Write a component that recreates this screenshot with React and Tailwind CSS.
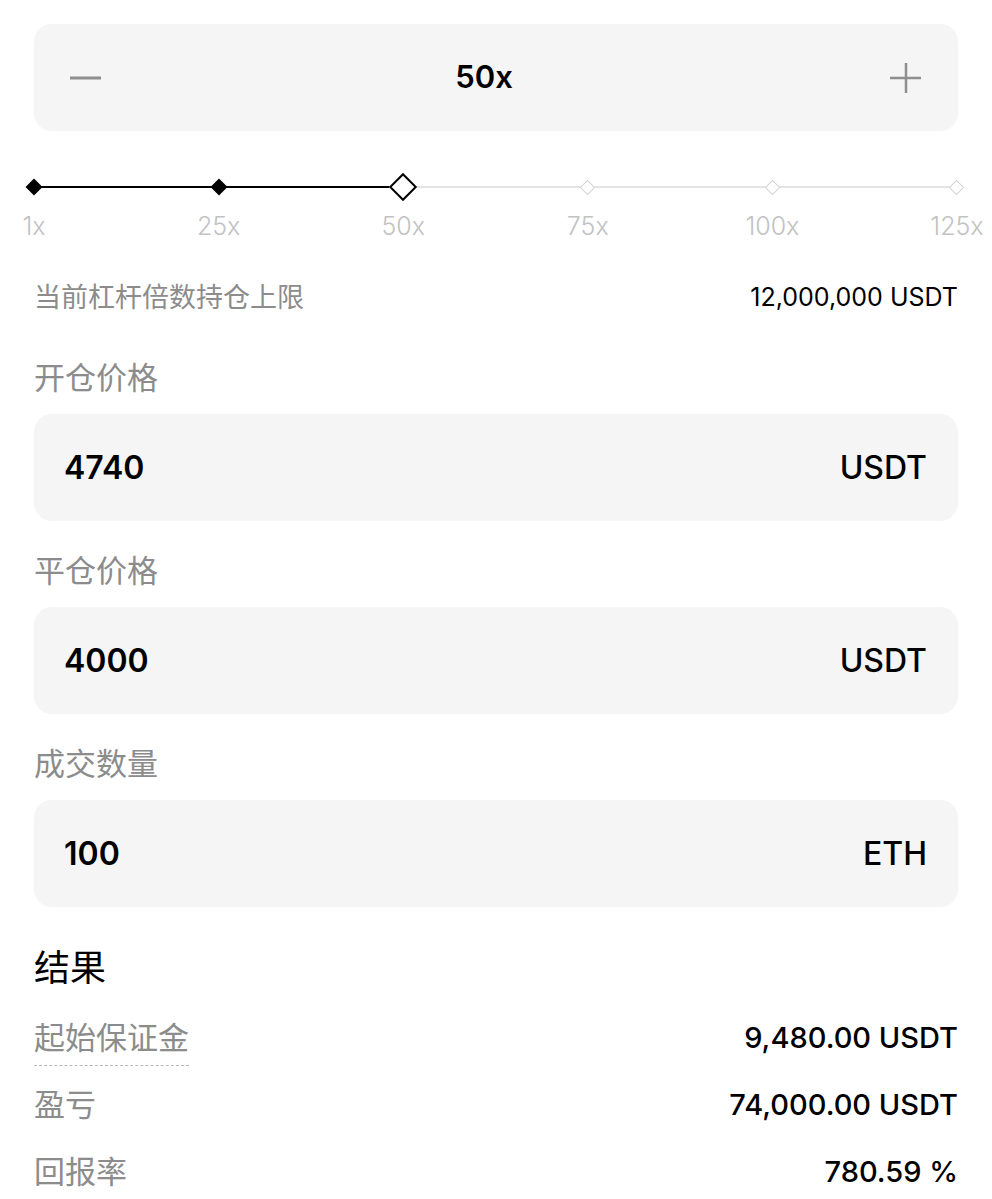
import React from 'react';

const FONT = { fontFamily: 'Inter, "Noto Sans CJK SC", sans-serif' };

const marks = ['1x', '25x', '50x', '75x', '100x', '125x'];
const current = 2;

const Node = ({ index }) => {
  if (index < current) {
    return <div className="h-[12px] w-[12px] shrink-0 rotate-45 bg-black" />;
  }
  if (index === current) {
    return <div className="h-[20px] w-[20px] shrink-0 rotate-45 border-2 border-black bg-white" />;
  }
  return <div className="h-[11px] w-[11px] shrink-0 rotate-45 border-[1.5px] border-[#d4d4d4] bg-white" />;
};

const Field = ({ label, value, unit, first }) => (
  <div className={first ? 'pt-[42px]' : 'pt-[30px]'}>
    <div className="h-[40px] text-[31px] leading-[40px] text-[#8c8c8c]">{label}</div>
    <div className="mt-[16px] flex h-[107px] items-center justify-between rounded-[18px] bg-[#f5f5f5] pl-[30px] pr-[31px]">
      <span className="text-[32px] font-semibold text-black">{value}</span>
      <span className="text-[32px] font-medium text-black">{unit}</span>
    </div>
  </div>
);

const ResultRow = ({ label, value, dotted }) => (
  <div className="flex h-[67px] items-center justify-between">
    <span
      className={
        dotted
          ? 'relative top-[5px] border-b border-dashed border-[#b8b8b8] pb-[9px] text-[31px] leading-[36px] text-[#8c8c8c]'
          : 'text-[31px] leading-[36px] text-[#8c8c8c]'
      }
    >
      {label}
    </span>
    <span className="text-[29px] font-medium text-black">{value}</span>
  </div>
);

export default function App() {
  return (
    <div className="min-h-[1199px] bg-white pb-[20px] pl-[34px] pr-[34px] pt-[24px]" style={FONT}>
      {/* leverage stepper */}
      <div className="flex h-[107px] items-center rounded-[18px] bg-[#f5f5f5] pl-[36px] pr-[36px]">
        <svg width="32" height="32" viewBox="0 0 32 32">
          <line x1="0" y1="16" x2="31" y2="16" stroke="#8f8f8f" strokeWidth="3" />
        </svg>
        <span className="flex-1 pr-[24px] text-center text-[31px] font-semibold text-black">50x</span>
        <svg width="32" height="32" viewBox="0 0 32 32">
          <line x1="0" y1="16" x2="31" y2="16" stroke="#8f8f8f" strokeWidth="2.5" />
          <line x1="16" y1="1" x2="16" y2="31" stroke="#8f8f8f" strokeWidth="2.5" />
        </svg>
      </div>

      {/* slider */}
      <div className="relative mt-[44px] h-[24px] w-[923px]">
        <div className="absolute left-0 top-[11px] h-[2px] w-[40%] bg-black" />
        <div className="absolute right-0 top-[11px] h-[2px] w-[60%] bg-[#e3e3e3]" />
        <div className="relative flex h-full items-center justify-between">
          {marks.map((m, i) => (
            <div key={m} className="flex w-0 justify-center">
              <Node index={i} />
            </div>
          ))}
        </div>
      </div>
      <div className="mt-[13px] flex w-[923px] justify-between">
        {marks.map((m) => (
          <div key={m} className="flex w-0 justify-center">
            <span className="whitespace-nowrap text-[25px] font-light leading-[28px] text-[#c2c2c2]">{m}</span>
          </div>
        ))}
      </div>

      {/* position limit */}
      <div className="mt-[40px] flex h-[36px] items-center justify-between">
        <span className="text-[27px] text-[#8c8c8c]">当前杠杆倍数持仓上限</span>
        <span className="text-[25px] text-black">12,000,000 USDT</span>
      </div>

      <Field label="开仓价格" value="4740" unit="USDT" first />
      <Field label="平仓价格" value="4000" unit="USDT" />
      <Field label="成交数量" value="100" unit="ETH" />

      {/* results */}
      <div className="mt-[39px] h-[44px] text-[36px] leading-[44px] text-black">结果</div>
      <div className="mt-[14px]">
        <ResultRow label="起始保证金" value="9,480.00 USDT" dotted />
        <ResultRow label="盈亏" value="74,000.00 USDT" />
        <ResultRow label="回报率" value="780.59 %" />
      </div>
    </div>
  );
}
